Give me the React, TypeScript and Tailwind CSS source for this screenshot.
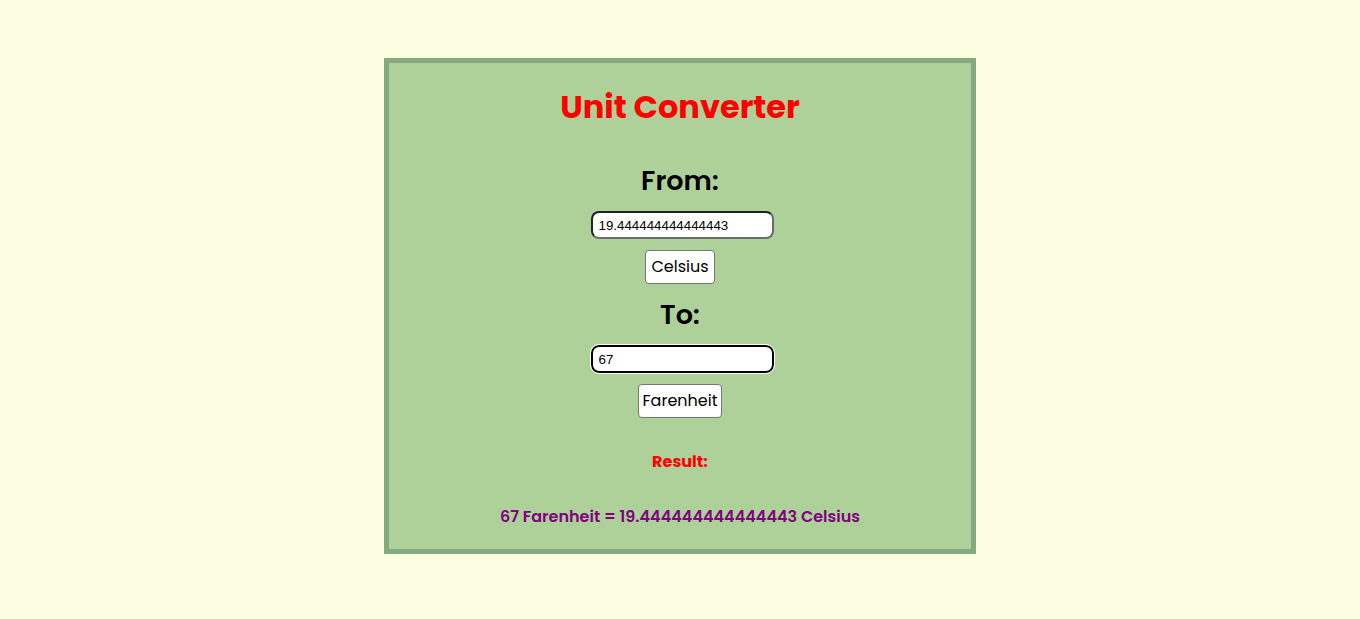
export default function App() {
  const font = { fontFamily: "Poppins, Inter, 'Noto Sans', sans-serif" };
  const inputFont = { fontFamily: "'Liberation Sans', Arial, sans-serif" };
  return (
    <div className="min-h-screen bg-[#fcfce0] flex justify-center pt-[58px]" style={font}>
      <div className="w-[592px] h-[496px] border-[5px] border-[#84aa80] bg-[#aed199] flex flex-col items-center">
        <h1 className="mt-[28px] text-[32px] leading-none font-bold text-[#ff0000]">Unit Converter</h1>

        <h2 className="mt-[44px] text-[27px] leading-none font-semibold text-black">From:</h2>
        <input
          readOnly
          value="19.444444444444443"
          className="mt-[17px] ml-[4px] w-[183px] h-[28px] px-[6px] rounded-[8px] border-2 border-t-[#222] border-l-[#222] border-b-[#6b6b6b] border-r-[#6b6b6b] bg-white text-[13.33px] text-black outline-none"
          style={inputFont}
        />
        <button className="mt-[11px] h-[34px] px-[5px] rounded-[4px] border border-[#767676] bg-white text-[16px] text-black">
          Celsius
        </button>

        <h2 className="mt-[17px] text-[27px] leading-none font-semibold text-black">To:</h2>
        <input
          readOnly
          value="67"
          className="mt-[17px] ml-[4px] w-[183px] h-[28px] px-[6px] rounded-[8px] border-2 border-black bg-white text-[13.33px] text-black outline outline-1 outline-white"
          style={inputFont}
        />
        <button className="mt-[11px] h-[34px] px-[4px] rounded-[4px] border border-[#767676] bg-white text-[16px] text-black">
          Farenheit
        </button>

        <p className="mt-[36px] text-[16px] leading-none font-bold text-[#ff0000]">Result:</p>
        <p className="mt-[39px] text-[16px] leading-none font-semibold text-[#800080]">
          67 Farenheit = 19.444444444444443 Celsius
        </p>
      </div>
    </div>
  );
}
